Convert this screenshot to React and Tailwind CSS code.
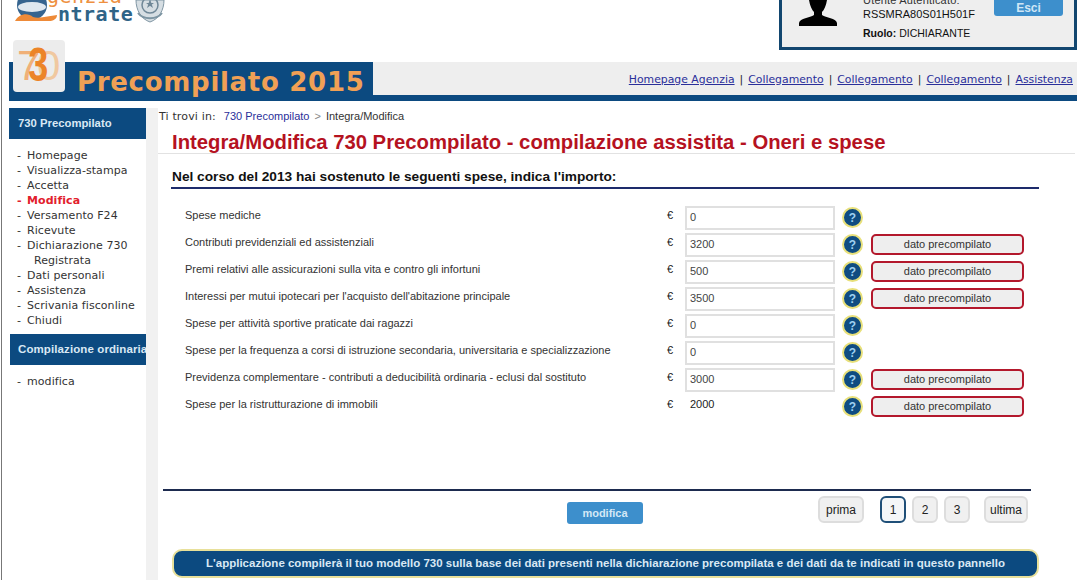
const rows = [
  { label: "Spese mediche", value: "0" },
  { label: "Contributi previdenziali ed assistenziali", value: "3200", pre: true },
  { label: "Premi relativi alle assicurazioni sulla vita e contro gli infortuni", value: "500", pre: true },
  { label: "Interessi per mutui ipotecari per l'acquisto dell'abitazione principale", value: "3500", pre: true },
  { label: "Spese per attività sportive praticate dai ragazzi", value: "0" },
  { label: "Spese per la frequenza a corsi di istruzione secondaria, universitaria e specializzazione", value: "0" },
  { label: "Previdenza complementare - contributi a deducibilità ordinaria - eclusi dal sostituto", value: "3000", pre: true },
  { label: "Spese per la ristrutturazione di immobili", value: "2000", pre: true, plain: true },
];

const menu = [
  ["Homepage"], ["Visualizza-stampa"], ["Accetta"], ["Modifica", true], ["Versamento F24"], ["Ricevute"],
  ["Dichiarazione 730"], ["Registrata", false, true], ["Dati personali"], ["Assistenza"], ["Scrivania fisconline"], ["Chiudi"],
];

const links = ["Homepage Agenzia", "Collegamento", "Collegamento", "Collegamento", "Assistenza"];

function Logo() {
  return (
    <div className="relative w-[170px] h-[24px] overflow-hidden ml-[13px]">
      <svg width="50" height="24" viewBox="0 0 50 24" className="absolute left-0 top-0">
        <circle cx="19" cy="5" r="15" fill="#35648f" />
        <ellipse cx="19" cy="7" rx="14" ry="5" fill="#dfe8f0" />
        <path d="M2 21 C7 13 15 13 20 17 C26 19 36 16 44 15 C44 19 40 21 36 21 Z" fill="#ee8a38" />
      </svg>
      <span className="absolute left-[34px] top-[-14px] font-['DejaVu_Sans_Mono',monospace] text-[20px] leading-[20px] tracking-[0.5px] text-[#ee9040]">genzia</span>
      <span className="absolute left-[45px] top-[4px] font-['DejaVu_Sans_Mono',monospace] font-bold text-[20px] leading-[20px] tracking-[0.5px] text-[#2f6487]">ntrate</span>
      <svg width="34" height="24" viewBox="0 0 34 24" className="absolute left-[120px] top-0">
        <path d="M3 0 C3 10 8 19 17 22 C26 19 31 10 31 0 Z" fill="#d6dee3" stroke="#7f95a3" strokeWidth="1" />
        <circle cx="17" cy="5" r="8" fill="none" stroke="#6f8797" strokeWidth="1.5" />
        <path d="M17 -1 L20 8 L13 3 L21 3 L14 8 Z" fill="#6f8797" />
        <path d="M5 13 C10 20 24 20 29 13" fill="none" stroke="#7d95a3" strokeWidth="2" />
      </svg>
    </div>
  );
}

function Silhouette() {
  return (
    <svg width="40" height="26" viewBox="0 0 40 26" className="shrink-0">
      <path d="M11 0 C12 6 14 10 16 12 L16 15 C12 18 2 18 1 23 L1 26 L39 26 L39 23 C38 18 28 18 24 15 L24 12 C26 10 28 6 29 0 Z" fill="#000" />
    </svg>
  );
}

function Tile() {
  return (
    <div className="absolute z-10 left-[13px] top-[40px] w-[52px] h-[52px] rounded-[4px] bg-[#ececec] overflow-hidden font-['Liberation_Sans',sans-serif]">
      <span className="absolute left-[4px] top-[5px] text-[42px] leading-[42px] text-[#f0b078]">7</span>
      <span className="absolute left-[24px] top-[5px] text-[42px] leading-[42px] text-[#f0c8a0]">0</span>
      <span className="absolute left-[12px] top-[1px] text-[48px] leading-[48px] font-bold text-[#ec8428] scale-x-75">3</span>
    </div>
  );
}

function Help() {
  return (
    <div className="w-[21px] h-[21px] rounded-full bg-[#0f4c81] border-2 border-[#e8e07a] flex items-center justify-center text-[#9fd0f0] text-[12px] font-bold shrink-0">?</div>
  );
}

function Pre() {
  return (
    <div className="w-[153px] h-[21px] rounded-[5px] border-2 border-[#b3182c] bg-[#eeeeee] flex items-center justify-center text-[11px] text-[#333]">dato precompilato</div>
  );
}

function Page({ children, active, w }) {
  return (
    <div className={`${w} h-[27px] rounded-[6px] flex items-center justify-center text-[12px] text-[#222] ${active ? "border-2 border-[#1f4f78] bg-[#f4f6f8]" : "border-2 border-[#dddddd] bg-[#f0f0f0]"}`}>{children}</div>
  );
}

export default function App() {
  return (
    <div className="relative w-full h-[580px] overflow-hidden bg-white font-['Liberation_Sans',sans-serif] text-[#222]">
      <div className="absolute left-[1px] top-0 bottom-0 w-[1px] bg-[#777]" />
      <div className="h-[62px] flex items-start justify-between pr-[8px]">
        <Logo />
        <div className="w-[298px] h-[50px] bg-[#eeeeee] border-[3px] border-t-0 border-[#12466f] flex items-start pl-[16px] relative overflow-hidden">
          <div className="mt-0"><Silhouette /></div>
          <div className="ml-[25px] mt-[-6px] text-[11px] leading-[13px] text-[#111]">
            <div className="text-[#333] tracking-[0.2px]">Utente Autenticato:</div>
            <div className="text-[11px] leading-[14px]">RSSMRA80S01H501F</div>
            <div className="mt-[6px] text-[10.5px]"><span className="font-bold">Ruolo:</span> DICHIARANTE</div>
          </div>
          <div className="absolute left-[212px] top-0 w-[69px] h-[16px] rounded-b-[3px] bg-[#3d8fcc] text-[#cfe6f6] text-[12px] font-bold flex items-center justify-center">Esci</div>
        </div>
      </div>

      <Tile />

      <div className="ml-[9px] mr-[8px] h-[39px] flex relative">
        <div className="w-[364px] h-[39px] bg-[#0c4a80] pl-[68px] flex items-center">
          <span className="font-['DejaVu_Sans',sans-serif] font-bold text-[26px] leading-[30px] tracking-[0.7px] text-[#f0a055]">Precompilato 2015</span>
        </div>
        <div className="flex-1 flex flex-col">
          <div className="h-[33px] pt-[3px] bg-[#eeeeee] flex items-center justify-end pr-[4px] font-['DejaVu_Sans',sans-serif] text-[10.85px]">
            {links.map((l, i) => (
              <span key={i} className="flex items-center">
                {i > 0 && <span className="mx-[5px] text-[#222]">|</span>}
                <span className="underline text-[#2a2f9a]">{l}</span>
              </span>
            ))}
          </div>
          <div className="h-[6px] bg-[#0c4a80]" />
        </div>
      </div>

      <div className="flex ml-[9px] mt-[7px] mr-[10px]">
        <div className="w-[137px] shrink-0 font-['DejaVu_Sans',sans-serif] text-[11px]">
          <div className="h-[31px] bg-[#0c4a80] text-[#d9e8f4] flex items-center pl-[9px] font-['Liberation_Sans',sans-serif] text-[11.3px] font-bold">730 Precompilato</div>
          <div className="mt-[9px] pl-[8px] text-[#333] tracking-[0.07px]">
            {menu.map(([t, active, indent], i) => (
              <div key={i} className={`h-[15px] leading-[15px] flex ${active ? "text-[#e2202c] font-bold" : ""} ${indent ? "pl-[17px]" : ""}`}>
                {!indent && <span className="w-[10px] shrink-0">-</span>}
                <span>{t}</span>
              </div>
            ))}
          </div>
          <div className="mt-[6px] ml-[1px] h-[31px] bg-[#0c4a80] text-[#d9e8f4] flex items-center pl-[8px] font-['Liberation_Sans',sans-serif] text-[11.5px] tracking-[0.1px] font-bold whitespace-nowrap overflow-hidden">Compilazione ordinaria</div>
          <div className="mt-[9px] pl-[8px] leading-[15px] text-[#333] tracking-[0.07px] flex"><span className="w-[10px] shrink-0">-</span><span>modifica</span></div>
        </div>
        <div className="w-[12px] shrink-0 self-stretch bg-[#f1f1f1] h-[480px]" />
        <div className="flex-1 min-w-0">
          <div className="text-[11px] leading-[14px] mt-[1px] text-[#333] pl-[1px]">
            <span className="font-['DejaVu_Sans',sans-serif] tracking-[0.15px]">Ti trovi in:</span>
            <span className="ml-[8px] text-[#2a2f9a]">730 Precompilato</span>
            <span className="mx-[5px] text-[#888]">&gt;</span>
            <span>Integra/Modifica</span>
          </div>
          <div className="mt-[5px] h-[25px] pl-[14px] border-b border-[#e2e2e2] text-[20.3px] leading-[27px] font-bold text-[#b5121f] whitespace-nowrap">
            Integra/Modifica 730 Precompilato - compilazione assistita - Oneri e spese
          </div>
          <div className="ml-[13px] w-[868px] h-[35px] border-b-2 border-[#1d2b6b] pt-[14px] pl-[1px] text-[13.7px] leading-[18px] font-bold text-[#111]">
            Nel corso del 2013 hai sostenuto le seguenti spese, indica l'importo:
          </div>
          <div className="mt-[15px]">
            {rows.map((r, i) => (
              <div key={i} className="h-[27px] flex items-center pl-[27px] text-[11px]">
                <div className="w-[482px] text-[#333] whitespace-nowrap -mt-[4px]">{r.label}</div>
                <div className="w-[18px] text-[11px] -mt-[4px]">€</div>
                {r.plain ? (
                  <div className="w-[150px] pl-[5px] text-[11px] -mt-[4px]">{r.value}</div>
                ) : (
                  <div className="w-[150px] h-[24px] border-2 border-[#e0e0e0] bg-white pl-[3px] flex items-center text-[11px] text-[#444]">{r.value}</div>
                )}
                <div className="ml-[7px]"><Help /></div>
                <div className="ml-[8px]">{r.pre && <Pre />}</div>
              </div>
            ))}
          </div>
          <div className="ml-[5px] w-[868px] mt-[69px] border-t-2 border-[#1d2b4f]" />
          <div className="ml-[5px] w-[868px] h-[54px] flex items-start pt-[5px]">
            <div className="ml-[404px] mt-[6px] w-[76px] h-[22px] rounded-[3px] bg-[#3d8fcc] text-[#d4e8f6] text-[11px] font-bold flex items-center justify-center">modifica</div>
            <div className="ml-[175px] flex">
              <Page w="w-[46px]">prima</Page>
              <div className="ml-[16px]"><Page w="w-[26px]" active>1</Page></div>
              <div className="ml-[6px]"><Page w="w-[26px]">2</Page></div>
              <div className="ml-[6px]"><Page w="w-[26px]">3</Page></div>
              <div className="ml-[14px]"><Page w="w-[44px]">ultima</Page></div>
            </div>
          </div>
          <div className="ml-[14px] w-[867px] h-[29px] mt-[4px] rounded-[10px] bg-[#0c4a80] border-2 border-[#e8e09a] flex items-center justify-center text-[#d9e8f4] text-[11.5px] font-bold whitespace-nowrap">
            L'applicazione compilerà il tuo modello 730 sulla base dei dati presenti nella dichiarazione precompilata e dei dati da te indicati in questo pannello
          </div>
        </div>
      </div>
    </div>
  );
}
